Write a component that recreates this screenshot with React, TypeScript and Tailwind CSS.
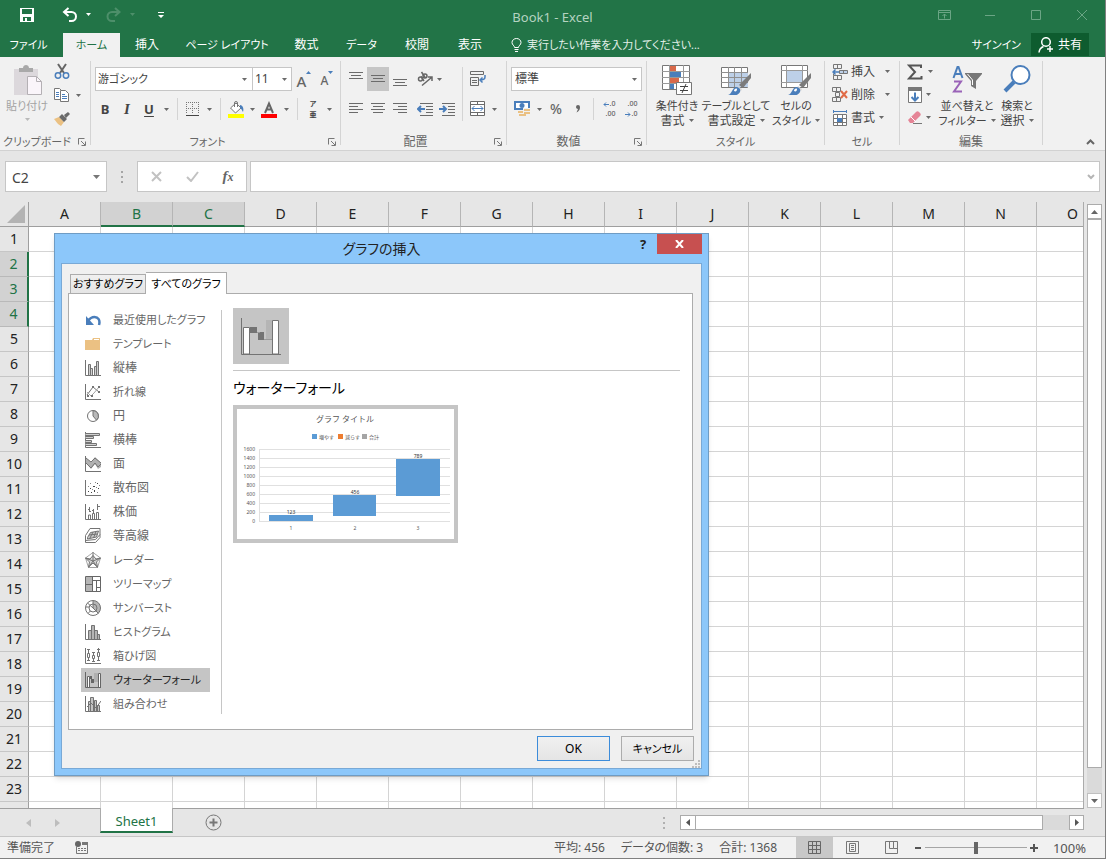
import { useState, type ReactNode } from "react"

type IconProps = {
    w?: number
    h?: number
    children: ReactNode
}

type GroupProps = {
    label: string
    width: string
    launcher?: boolean
    children: ReactNode
}

type ButtonProps = {
    label: string
    className?: string
    children: ReactNode
}

const columns = ["A", "B", "C", "D", "E", "F", "G", "H", "I", "J", "K", "L", "M", "N", "O"]
const rows = Array.from({ length: 23 }, (_, i) => String(i + 1)).concat("")

const ribbonTabs = [
    { label: "挿入", width: "w-[54px]" },
    { label: "ページ レイアウト", width: "w-[106px]" },
    { label: "数式", width: "w-[53px]" },
    { label: "データ", width: "w-[57px]" },
    { label: "校閲", width: "w-[54px]" },
    { label: "表示", width: "w-[52px]" },
]

function labelSize(label: string) {
    return /[ぁ-ヶ]/.test(label) ? "text-[11px]" : "text-[12px]"
}

function Icon({ w = 16, h = 16, children }: IconProps) {
    return (
        <svg width={w} height={h} viewBox={`0 0 ${w} ${h}`} fill="none" className="shrink-0" aria-hidden="true">
            {children}
        </svg>
    )
}

function Caret({ light = false }: { light?: boolean }) {
    return (
        <Icon w={5} h={3}>
            <path d="M0 0h5L2.5 3z" fill={light ? "#b9b9b9" : "#6a6a6a"} />
        </Icon>
    )
}

function ToolButton({ label, className = "w-[22px]", children }: ButtonProps) {
    return (
        <button aria-label={label} className={`flex h-6 shrink-0 items-center justify-center ${className}`}>
            {children}
        </button>
    )
}

function CaretButton({ label }: { label: string }) {
    return (
        <ToolButton label={label} className="w-3">
            <Caret />
        </ToolButton>
    )
}

function Divider() {
    return <div className="mx-[5px] h-[22px] w-px shrink-0 bg-[#d4d4d4]" />
}

function Group({ label, width, launcher, children }: GroupProps) {
    return (
        <section className={`flex shrink-0 ${width}`}>
            <div className="flex min-w-0 flex-1 flex-col">
                <div className="h-[76px]">{children}</div>
                <div className="flex h-[17px] items-end">
                    <p className={`flex-1 text-center leading-4 whitespace-nowrap text-[#666666] ${labelSize(label)}`}>{label}</p>
                    {launcher && (
                        <button aria-label={`${label}の設定`} className="flex h-4 w-4 items-center justify-center">
                            <Icon w={8} h={8}>
                                <path d="M.5 6.5v-6h6M3 3l4 4M7.5 3.5v4h-4" stroke="#777" />
                            </Icon>
                        </button>
                    )}
                </div>
            </div>
            <div className="mt-1 h-[84px] w-px bg-[#d4d4d4]" />
        </section>
    )
}

function BigButton({ lines, width, children }: { lines: string[]; width: string; children: ReactNode }) {
    return (
        <button className={`flex shrink-0 flex-col items-center pt-2 leading-[15px] whitespace-nowrap text-[#444444] ${width}`}>
            {children}
            <span className={`mt-[3px] ${labelSize(lines[0])}`}>{lines[0]}</span>
            <span className={`flex items-center gap-1 ${labelSize(lines[1])}`}>
                {lines[1]}
                <Caret />
            </span>
        </button>
    )
}

function AlignIcon({ widths, side, top = 1 }: { widths: number[]; side: "left" | "center" | "right"; top?: number }) {
    return (
        <Icon w={14} h={14}>
            {widths.map((width, i) => {
                const x = side === "left" ? 0 : side === "right" ? 14 - width : (14 - width) / 2
                return <rect key={i} x={x} y={top + i * 3} width={width} height="1" fill="#6b6b6b" />
            })}
        </Icon>
    )
}

const AXIS = "M.5 0v15.5H16"

const chartTypes = [
    {
        label: "最近使用したグラフ",
        icon: (
            <>
                <path d="M14 13c1.500-5-1-8-4.500-8C7 5 5 6 3 9" stroke="#4a7ebb" strokeWidth="2.5" />
                <path d="M1 4v9h8z" fill="#4a7ebb" />
            </>
        ),
    },
    {
        label: "テンプレート",
        icon: <path d="M0 4h7l1-2h7v12H0zM9 3v1h5V3z" fill="#ebc183" />,
    },
    {
        label: "縦棒",
        icon: (
            <>
                <path d={AXIS} stroke="#737373" />
                <path d="M3.5 15V4.5h2V15M5.5 15V8.500h2V15M9.5 15V6.5h2V15M11.5 15V1.5h2V15" stroke="#737373" fill="#d0d0d0" />
            </>
        ),
    },
    {
        label: "折れ線",
        icon: (
            <>
                <path d={AXIS} stroke="#737373" />
                <path d="M2 11l6-8 6 5" stroke="#737373" />
                <path d="M2 8l4 4 3-3 5-6" stroke="#a5a5a5" />
                <path d="M7 2h2v2H7zM13 7h2v2h-2zM2 11h2v2H2zM6 11h2v2H6zM13 2h2v2h-2z" fill="#737373" />
            </>
        ),
    },
    {
        label: "円",
        icon: (
            <>
                <circle cx="8" cy="8" r="5.5" stroke="#737373" />
                <path d="M8 2.5a5.5 5.5 0 0 1 3.5 9.7L8 8z" fill="#b9b9b9" stroke="#737373" />
            </>
        ),
    },
    {
        label: "横棒",
        icon: (
            <>
                <path d={AXIS} stroke="#737373" />
                <path d="M.5 1.500h14v2H.5M.5 4.500h8v2h-8M.5 8.500h6v2h-6M.5 11.500h11v2H.5" stroke="#737373" fill="#d0d0d0" />
            </>
        ),
    },
    {
        label: "面",
        icon: (
            <>
                <path d="M1 2l5 4 4-5 6 6v4l-3 2-3-5-4 5-5-6z" fill="#b0b0b0" />
                <path d={AXIS} stroke="#737373" />
                <path d="M1 2l5 4 4-4 6 5M1 7l5 5 4-5 3 4 3-3" stroke="#737373" />
            </>
        ),
    },
    {
        label: "散布図",
        icon: (
            <>
                <path d={AXIS} stroke="#737373" />
                <path d="M3 11h1v1H3zM5 8h1v1H5zM8 6h2v1H8zM9 10h1v2H9zM12 3h1v1h-1zM13 8h1v1h-1zM6 12h1v1H6z" fill="#444" />
                <path d="M5 3h1v1H5zM10 2h1v1h-1zM14 5h1v1h-1zM11 7h1v1h-1zM3 6h1v1H3zM12 12h1v1h-1zM7 9h1v1H7z" fill="#888" />
            </>
        ),
    },
    {
        label: "株価",
        icon: (
            <>
                <path d={AXIS} stroke="#737373" />
                <path d="M3.5 15v-4h2v4M7.5 15V9.5h2V15M11.5 15V8.5h2V15M4.5 3v5M8.5 5v5M12.5 0v6M3 5.500h1.500M4.500 7.500H6M7 6.500h1.500M12.500 2.500H15" stroke="#737373" />
            </>
        ),
    },
    {
        label: "等高線",
        icon: (
            <>
                <path d="M.5 7.500L5 .5h10v9L10.500 14.500H.5z" stroke="#737373" />
                <path d="M2.500 9.500l3-5 8-1.500-2 6-9 2z" fill="#c8c8c8" stroke="#737373" />
                <path d="M4 7l8.500-1M8 4l-3 6M11 3.500L8.500 10M.5 12.500l10-1 4.500-5" stroke="#737373" />
            </>
        ),
    },
    {
        label: "レーダー",
        icon: (
            <>
                <path d="M8 .5l7.500 5.500-3 9.500h-9L.5 6z" stroke="#a5a5a5" />
                <path d="M8 3.500L11 7l4.500-1-4 4 1 5L8 11l-4.500 4 1-5-4-4L5 7z" fill="#d5d5d5" stroke="#737373" />
                <path d="M8 0v9M.5 6L8 9l7.500-3M3.500 15.500L8 9l4.500 6.500" stroke="#737373" />
            </>
        ),
    },
    {
        label: "ツリーマップ",
        icon: (
            <>
                <path d="M.5.5h15v15H.5z" fill="#fff" stroke="#666" />
                <path d="M1 1h7v14H1z" fill="#b5b5b5" />
                <path d="M7.5 1v14M1 8.5h6.5M8 4.5h7.5M11.5 4.5V15M11.5 11.5H15" stroke="#666" />
            </>
        ),
    },
    {
        label: "サンバースト",
        icon: (
            <>
                <path d="M8 .5a7.500 7.500 0 0 1 5 13L8 8z" fill="#b5b5b5" />
                <circle cx="8" cy="8" r="7.5" stroke="#737373" />
                <circle cx="8" cy="8" r="4" stroke="#737373" />
                <path d="M8 .5V8l5.500 5.500M.5 7H4M3 13.500l2.500-2.700M2.500 3L8 8" stroke="#737373" />
            </>
        ),
    },
    {
        label: "ヒストグラム",
        icon: (
            <>
                <path d={AXIS} stroke="#737373" />
                <path d="M3.5 15V6.5h3V15M6.5 15V1.5h3V15M9.5 15V6.5h3V15M12.5 15v-4.5h2V15" fill="#b5b5b5" stroke="#737373" />
            </>
        ),
    },
    {
        label: "箱ひげ図",
        icon: (
            <>
                <path d={AXIS} stroke="#737373" />
                <path d="M3.5 1v11M8.5 4v9M13.5 0v12M2 1.500h3M7 4.500h3M12 1.500h3M2 12.500h3M7 13.500h3M12 12.500h3" stroke="#737373" />
                <path d="M2.500 5.500h2v4h-2zM7.500 7.500h2v3h-2zM12.500 4.500h2v4h-2z" fill="#fff" stroke="#737373" />
            </>
        ),
    },
    {
        label: "ウォーターフォール",
        icon: (
            <>
                <path d="M9 1h4v9H9z" fill="#b0b0b0" />
                <path d={AXIS} stroke="#666" />
                <path d="M2.500 15V4.500h2V15M13.500 15V1.500h2V15" fill="#fff" stroke="#666" />
                <path d="M5 4h2v3h2v4H6V7H5z" fill="#666" />
            </>
        ),
    },
    {
        label: "組み合わせ",
        icon: (
            <>
                <path d={AXIS} stroke="#737373" />
                <path d="M3.5 15V5.5h2V15M5.5 15V1.5h3V15M9.5 15V4.5h2V15M12.5 15V9.5h2V15" fill="#c4c4c4" stroke="#737373" />
                <path d="M2 11l4-4 5 5 5-7" stroke="#737373" />
            </>
        ),
    },
]

function TitleBar() {
    return (
        <div className="grid h-[33px] grid-cols-[1fr_auto_1fr] items-center">
            <div className="flex items-center pb-1 pl-5">
                <button aria-label="保存">
                    <Icon w={14} h={14}>
                        <path d="M0 0h14v14H0zM2 1v5h10V1zM3 9v4h2v-3h2v3h4V9z" fill="#fff" fillRule="evenodd" />
                    </Icon>
                </button>
                <button aria-label="元に戻す" className="ml-7">
                    <Icon w={16} h={16}>
                        <path d="M3 5h6.5a4.500 4.500 0 0 1 0 9H7" stroke="#fff" strokeWidth="2" />
                        <path d="M6.500 1L2 5l4.500 4" stroke="#fff" strokeWidth="2" />
                    </Icon>
                </button>
                <button aria-label="元に戻す一覧" className="ml-2">
                    <Icon w={5} h={3}>
                        <path d="M0 0h5L2.5 3z" fill="#fff" />
                    </Icon>
                </button>
                <button aria-label="やり直し" className="ml-[15px]">
                    <Icon w={16} h={16}>
                        <path d="M12 5H6a4.500 4.500 0 0 0 0 9h3M9 1l4.500 4L9 9" stroke="#4d8f6a" strokeWidth="2" />
                    </Icon>
                </button>
                <button aria-label="やり直し一覧" className="ml-2">
                    <Icon w={5} h={3}>
                        <path d="M0 0h5L2.5 3z" fill="#4d8f6a" />
                    </Icon>
                </button>
                <button aria-label="クイック アクセス ツール バーのカスタマイズ" className="ml-[23px]">
                    <Icon w={6} h={6}>
                        <path d="M0 0h6v1H0zM0 3h6L3 6z" fill="#fff" />
                    </Icon>
                </button>
            </div>
            <h1 className="text-[13px] text-[#b4d3c1]">Book1 - Excel</h1>
            <div className="flex items-center justify-end pb-1">
                <button aria-label="リボンの表示オプション" className="flex w-[46px] justify-center">
                    <Icon w={13} h={10}>
                        <path d="M.5.5h12v9H.5zM.5 2.5h12M6.5 8.5V4M4.5 6l2-2 2 2" stroke="#6ba585" />
                    </Icon>
                </button>
                <button aria-label="最小化" className="flex w-[46px] justify-center">
                    <Icon w={10} h={10}>
                        <path d="M0 5.5h10" stroke="#6ba585" />
                    </Icon>
                </button>
                <button aria-label="最大化" className="flex w-[46px] justify-center">
                    <Icon w={10} h={10}>
                        <path d="M.5.5h9v9h-9z" stroke="#6ba585" />
                    </Icon>
                </button>
                <button aria-label="閉じる" className="flex w-[46px] justify-center">
                    <Icon w={10} h={10}>
                        <path d="M0 0l10 10M10 0L0 10" stroke="#6ba585" />
                    </Icon>
                </button>
            </div>
        </div>
    )
}

function TabBar() {
    return (
        <nav className="flex h-6 items-center text-[11px] whitespace-nowrap text-white">
            <button className="w-[63px] pr-[6px]">ファイル</button>
            <button className="h-6 w-[57px] bg-[#f1f1f1] text-[#217346]">ホーム</button>
            {ribbonTabs.map((tab) => (
                <button key={tab.label} className={`${tab.width} ${labelSize(tab.label)}`}>{tab.label}</button>
            ))}
            <button className="ml-[15px] flex items-center gap-[5px] text-[#e4f0e9]">
                <Icon w={11} h={14}>
                    <path d="M3.5 9.5c0-2-2.500-2.500-2.500-5a4.500 4 0 0 1 9 0c0 2.500-2.500 3-2.500 5zM3.500 11.500h4M4 13.500h3" stroke="#fff" />
                </Icon>
                実行したい作業を入力してください...
            </button>
            <button className="mr-[10px] ml-auto">サインイン</button>
            <button className="mr-4 flex h-[23px] w-[58px] items-center justify-center gap-1 self-start bg-[#0e5c2f] text-[12px]">
                <Icon w={16} h={16}>
                    <circle cx="8" cy="5" r="4.3" stroke="#fff" strokeWidth="1.5" />
                    <path d="M1 15.500c.3-3 2-5 4.500-6M9 12h6M12 9v6" stroke="#fff" strokeWidth="1.5" />
                </Icon>
                共有
            </button>
        </nav>
    )
}

function BrushOverlay() {
    return (
        <>
            <path d="M30 8v5l-8 10-4-3z" fill="#7b7b7b" />
            <path d="M17 21l4 3-1 2-4-3z" fill="#d8d8d8" />
            <path d="M7 30c4-1 4-7 8-8 3 0 5 2 4 5-2 4-7 4-12 3z" fill="#4a7ebb" />
            <path d="M13 26c0-2 2-3 3-2 0 2-1 3-3 2z" fill="#fff" />
        </>
    )
}

function Ribbon() {
    return (
        <div className="flex h-[94px] border-b border-[#d2d2d2] bg-[#f1f1f1]">
            <Group label="クリップボード" width="w-[91px]" launcher>
                <div className="flex">
                    <button className="flex w-[54px] flex-col items-center pt-2 text-[11px] leading-[15px] whitespace-nowrap text-[#a3a3a3]">
                        <Icon w={30} h={30}>
                            <path d="M2 4h24v26H2z" fill="#dcd8dc" />
                            <path d="M7 3h4c0-4 6-4 6 0h4v4H7z" fill="#a9a9a9" />
                            <path d="M15.5 11.5h9l5 5v13h-14z" fill="#faf5fa" stroke="#b4b0b4" />
                            <path d="M24.5 11.5v5h5" stroke="#b4b0b4" />
                        </Icon>
                        <span className="mt-[3px]">貼り付け</span>
                        <span className="flex h-3 items-center"><Caret light /></span>
                    </button>
                    <div className="flex flex-col pt-[2px]">
                        <ToolButton label="切り取り" className="w-4">
                            <Icon>
                                <path d="M4 1l6 9M12 1L6 10" stroke="#666" strokeWidth="2" />
                                <circle cx="4" cy="12.5" r="2.7" stroke="#4a7ebb" strokeWidth="1.5" />
                                <circle cx="12" cy="12.5" r="2.7" stroke="#4a7ebb" strokeWidth="1.5" />
                            </Icon>
                        </ToolButton>
                        <div className="flex">
                            <ToolButton label="コピー" className="w-4">
                                <Icon>
                                    <path d="M.5 1.5h5l3 3v8h-8z" fill="#fff" stroke="#777" />
                                    <path d="M6.5 3.5h5l3 3v8h-8z" fill="#fff" stroke="#777" />
                                    <path d="M2 5.500h3M2 7.500h3M2 9.500h3M8 7.500h3M8 9.500h5M8 11.500h5" stroke="#4a7ebb" />
                                </Icon>
                            </ToolButton>
                            <ToolButton label="コピー オプション" className="w-4">
                                <Caret />
                            </ToolButton>
                        </div>
                        <ToolButton label="書式のコピー" className="w-4">
                            <Icon>
                                <path d="M0 8l5-2 5 5-3 4-3-2z" fill="#ebc183" />
                                <path d="M5 6l3-3 5 5-3 3zM10 4l4-3 2 2-4 4z" fill="#6a6a6a" />
                            </Icon>
                        </ToolButton>
                    </div>
                </div>
            </Group>

            <Group label="フォント" width="w-[250px]" launcher>
                <div className="flex flex-col gap-[6px] pt-[10px]">
                    <div className="flex items-center pl-1">
                        <div className="relative w-[158px]">
                            <select aria-label="フォント名" className="h-6 w-full appearance-none border border-[#c6c6c6] bg-white pl-[2px] text-[11px] text-[#444444]">
                                <option>游ゴシック</option>
                            </select>
                            <span className="pointer-events-none absolute top-[11px] right-[6px]"><Caret /></span>
                        </div>
                        <div className="relative -ml-px w-10">
                            <select aria-label="フォント サイズ" className="h-6 w-full appearance-none border border-[#c6c6c6] bg-white pl-[2px] text-[12px] text-[#444444]">
                                <option>11</option>
                            </select>
                            <span className="pointer-events-none absolute top-[11px] right-[5px]"><Caret /></span>
                        </div>
                        <ToolButton label="フォント サイズの拡大" className="w-6">
                            <span className="pt-1 text-[15px] leading-5 font-medium text-[#666666]">A</span>
                            <span className="self-start pt-1"><Icon w={5} h={3}><path d="M0 3h5L2.5 0z" fill="#4a7ebb" /></Icon></span>
                        </ToolButton>
                        <ToolButton label="フォント サイズの縮小" className="w-[22px]">
                            <span className="pt-1 text-[12px] leading-5 font-medium text-[#666666]">A</span>
                            <span className="self-start pt-1"><Icon w={5} h={3}><path d="M0 0h5L2.5 3z" fill="#4a7ebb" /></Icon></span>
                        </ToolButton>
                    </div>
                    <div className="flex items-center pl-[3px] text-[13px] font-bold text-[#444444]">
                        <ToolButton label="太字">B</ToolButton>
                        <ToolButton label="斜体"><i className="font-['Liberation_Serif',serif] text-[15px]">I</i></ToolButton>
                        <ToolButton label="下線"><u className="underline-offset-2">U</u></ToolButton>
                        <CaretButton label="下線オプション" />
                        <Divider />
                        <ToolButton label="罫線" className="w-5">
                            <Icon w={14} h={14}>
                                <path d="M.5 0v12M6.5 0v12M12.5 0v12M0 .5h13M0 6.5h13" stroke="#777" strokeDasharray="1 1" />
                                <path d="M0 13.500h13" stroke="#444" />
                            </Icon>
                        </ToolButton>
                        <CaretButton label="罫線オプション" />
                        <Divider />
                        <ToolButton label="塗りつぶしの色" className="w-5">
                            <Icon w={16} h={17}>
                                <path d="M2.5 7L8 2l5 5-5.500 5z" fill="#fff" stroke="#777" />
                                <path d="M6.5 6V2a1.500 1.500 0 0 1 3 0v4" stroke="#777" />
                                <path d="M12 4c3 0 4 4 3 7-1-1-1-3-3-4z" fill="#4a7ebb" />
                                <path d="M0 13h16v4H0z" fill="#ff0" />
                            </Icon>
                        </ToolButton>
                        <CaretButton label="塗りつぶしの色オプション" />
                        <ToolButton label="フォントの色">
                            <Icon w={16} h={17}>
                                <path d="M4 12L8 2.500 12 12M5.500 8.500h5" stroke="#666" strokeWidth="2" />
                                <path d="M0 13h16v4H0z" fill="#f00" />
                            </Icon>
                        </ToolButton>
                        <CaretButton label="フォントの色オプション" />
                        <Divider />
                        <ToolButton label="ふりがな" className="w-5">
                            <span className="flex flex-col text-[7px] leading-[11px] font-semibold">
                                <span>ア</span>
                                <span>亜</span>
                            </span>
                        </ToolButton>
                        <CaretButton label="ふりがなオプション" />
                    </div>
                </div>
            </Group>

            <Group label="配置" width="w-[166px]" launcher>
                <div className="flex pt-[10px]">
                    <div className="flex w-[121px] flex-col gap-[6px] pl-1">
                        <div className="flex items-center">
                            <ToolButton label="上揃え"><AlignIcon side="center" widths={[14, 10, 14]} top={0} /></ToolButton>
                            <ToolButton label="上下中央揃え" className="w-[22px] bg-[#c6c6c6]"><AlignIcon side="center" widths={[14, 10, 14]} top={3} /></ToolButton>
                            <ToolButton label="下揃え"><AlignIcon side="center" widths={[14, 10, 14]} top={7} /></ToolButton>
                            <ToolButton label="方向" className="ml-[6px] w-4">
                                <Icon>
                                    <circle cx="3.5" cy="8" r="2" stroke="#666" strokeWidth="1.5" />
                                    <circle cx="8" cy="5" r="2" stroke="#666" strokeWidth="1.5" />
                                    <path d="M4 5.500l3 4.500M4.500 1l4 6M5 14.500l9.500-8M11 6h4v4" stroke="#666" strokeWidth="1.5" />
                                </Icon>
                            </ToolButton>
                            <CaretButton label="方向オプション" />
                        </div>
                        <div className="flex items-center">
                            <ToolButton label="左揃え"><AlignIcon side="left" widths={[14, 9, 14, 9]} /></ToolButton>
                            <ToolButton label="中央揃え"><AlignIcon side="center" widths={[14, 10, 14, 10]} /></ToolButton>
                            <ToolButton label="右揃え"><AlignIcon side="right" widths={[14, 9, 14, 9]} /></ToolButton>
                            <ToolButton label="インデントを減らす" className="ml-[6px] w-4">
                                <Icon w={16} h={14}>
                                    <path d="M3 1.500h13M9 4.500h7M9 7.500h7M9 10.500h7M3 13.500h13" stroke="#6b6b6b" />
                                    <path d="M8 7H1M4 4L1 7l3 3" stroke="#4a7ebb" strokeWidth="2" />
                                </Icon>
                            </ToolButton>
                            <ToolButton label="インデントを増やす" className="ml-[6px] w-4">
                                <Icon w={16} h={14}>
                                    <path d="M3 1.500h13M9 4.500h7M9 7.500h7M9 10.500h7M3 13.500h13" stroke="#6b6b6b" />
                                    <path d="M0 7h7M4 4l3 3-3 3" stroke="#4a7ebb" strokeWidth="2" />
                                </Icon>
                            </ToolButton>
                        </div>
                    </div>
                    <div className="h-[54px] w-px bg-[#d4d4d4]" />
                    <div className="flex flex-col gap-[6px] pl-[7px]">
                        <ToolButton label="折り返して全体を表示する" className="w-4">
                            <Icon w={16} h={16}>
                                <path d="M.5.5h13v3H.5zM.5 6.5h8v8h-8zM2 9.5h5M2 11.5h5" stroke="#6b6b6b" />
                                <path d="M15 4v2c0 2-1 3-5 3M12.500 6.500L10 9l2.500 2.500" stroke="#4a7ebb" strokeWidth="1.5" />
                            </Icon>
                        </ToolButton>
                        <div className="flex">
                            <ToolButton label="セルを結合して中央揃え" className="w-4">
                                <Icon w={16} h={16}>
                                    <path d="M.5.5h14v14H.5zM.5 3.5h14M.5 11.5h14M7.5.5v3M7.5 11.5v3" fill="#fff" stroke="#6b6b6b" />
                                    <path d="M2 7.5h11M4.500 5L2 7.500 4.500 10M10.500 5L13 7.500 10.500 10" stroke="#4a7ebb" />
                                </Icon>
                            </ToolButton>
                            <ToolButton label="結合オプション" className="w-4"><Caret /></ToolButton>
                        </div>
                    </div>
                </div>
            </Group>

            <Group label="数値" width="w-[140px]" launcher>
                <div className="flex flex-col gap-[6px] pt-[10px] pl-1">
                    <div className="relative w-[131px]">
                        <select aria-label="数値の書式" className="h-6 w-full appearance-none border border-[#c6c6c6] bg-white pl-[3px] text-[#444444]">
                            <option>標準</option>
                        </select>
                        <span className="pointer-events-none absolute top-[11px] right-[5px]"><Caret /></span>
                    </div>
                    <div className="flex items-center text-[14px] font-medium text-[#666666]">
                        <ToolButton label="通貨表示形式">
                            <Icon w={17} h={17}>
                                <path d="M1 1h14v7H1z" fill="#fff" stroke="#4a7ebb" strokeWidth="2" />
                                <circle cx="8" cy="4.5" r="2.5" fill="#4a7ebb" />
                                <path d="M9 7h8v6h-3v3H4v-6h5z" fill="#f1f1f1" />
                                <path d="M10 8h6v2h-6zM10 11h6v2h-6zM4 10h5v2H4zM5 13h7v2H5z" fill="#ebc183" />
                            </Icon>
                        </ToolButton>
                        <CaretButton label="通貨オプション" />
                        <ToolButton label="パーセント スタイル">%</ToolButton>
                        <ToolButton label="桁区切りスタイル">
                            <Icon w={6} h={8}>
                                <path d="M1 2a2 2 0 0 1 4 0c0 3-1 4-3.500 5.500L3 4C2 4 1 3 1 2z" fill="#666" />
                            </Icon>
                        </ToolButton>
                        <div className="mx-1 h-[22px] w-px bg-[#d4d4d4]" />
                        <ToolButton label="小数点以下の表示桁数を増やす">
                            <span className="flex flex-col items-end text-[7px] leading-[10px]">
                                <span className="flex items-center gap-px">
                                    <Icon w={6} h={5}><path d="M6 2.5H1M3 .5l-2 2 2 2" stroke="#4a7ebb" /></Icon>
                                    .0
                                </span>
                                <span>.00</span>
                            </span>
                        </ToolButton>
                        <ToolButton label="小数点以下の表示桁数を減らす">
                            <span className="flex flex-col items-end text-[7px] leading-[10px]">
                                <span>.00</span>
                                <span className="flex items-center gap-px">
                                    <Icon w={6} h={5}><path d="M0 2.5h5M3 .5l2 2-2 2" stroke="#4a7ebb" /></Icon>
                                    .0
                                </span>
                            </span>
                        </ToolButton>
                    </div>
                </div>
            </Group>

            <Group label="スタイル" width="w-[178px]">
                <div className="flex pl-1">
                    <BigButton lines={["条件付き", "書式"]} width="w-[52px]">
                        <Icon w={30} h={30}>
                            <path d="M.5.5h27v24H.5z" fill="#fff" stroke="#777" />
                            <path d="M7.5 0v24M21.5 0v24M0 6.5h28M0 12.5h28M0 18.5h28" stroke="#999" />
                            <path d="M8 1h6v5H8zM8 13h9v5H8z" fill="#d9694a" />
                            <path d="M8 7h11v5H8zM8 19h4v5H8z" fill="#4a7ebb" />
                            <path d="M14.5 17.5h15v12h-15z" fill="#fff" stroke="#777" />
                            <path d="M18 21.5h8M18 25.5h8M24 19l-4 9" stroke="#444" />
                        </Icon>
                    </BigButton>
                    <BigButton lines={["テーブルとして", "書式設定"]} width="w-[66px]">
                        <Icon w={30} h={30}>
                            <path d="M.5 2.5h26v20H.5z" fill="#fff" stroke="#777" />
                            <path d="M7 8h20v14H7z" fill="#bdd0e8" />
                            <path d="M7.5 2v20M13.5 2v20M20.5 2v20M0 7.5h27M0 12.5h27M0 17.5h27" stroke="#8f8f8f" />
                            <BrushOverlay />
                        </Icon>
                    </BigButton>
                    <BigButton lines={["セルの", "スタイル"]} width="w-[54px]">
                        <Icon w={30} h={30}>
                            <path d="M.5.5h26v22H.5z" fill="#fff" stroke="#777" />
                            <path d="M5.5 0v22M21.5 0v22M0 5.5h27M0 17.5h27" stroke="#999" />
                            <path d="M6 6h15v11H6z" fill="#bdd0e8" />
                            <BrushOverlay />
                        </Icon>
                    </BigButton>
                </div>
            </Group>

            <Group label="セル" width="w-[75px]">
                <div className="flex flex-col pt-[3px] pl-[7px] text-[#444444]">
                    <button className="flex h-[23px] items-center gap-[3px]">
                        <Icon>
                            <path d="M1.5.5h8v4h-8zM5.5.5v4M1.5 11.5h8v4h-8zM5.5 11.5v4M1.5 9.5v2" stroke="#777" />
                            <path d="M7.5 6.5h8v3h-8zM11.5 6.5v3" fill="#bdd0e8" stroke="#777" />
                            <path d="M7 8H1M3.500 5.500L1 8l2.500 2.500" stroke="#4a7ebb" strokeWidth="1.5" />
                        </Icon>
                        <span className="w-[31px] text-left">挿入</span>
                        <Caret />
                    </button>
                    <button className="flex h-[23px] items-center gap-[3px]">
                        <Icon>
                            <path d="M.5.5h8v4h-8zM4.5.5v4M.5 10.5h8v4h-8zM4.5 10.5v4M3.5 5.5h4v4h-4z" stroke="#777" />
                            <path d="M9 4l6 7M15 4l-6 7" stroke="#e06a45" strokeWidth="2" />
                        </Icon>
                        <span className="w-[31px] text-left">削除</span>
                        <Caret />
                    </button>
                    <button className="flex h-[23px] items-center gap-[3px]">
                        <Icon>
                            <path d="M1.5 4.5h13v11h-13zM5.5 4.5v11M10.5 4.5v11M1.5 8.5h13M1.5 12.5h13" fill="#fff" stroke="#777" />
                            <path d="M5 8h5v4H5zM2 1h12v1H2zM1 0h1v3H1zM14 0h1v3h-1z" fill="#4a7ebb" />
                        </Icon>
                        <span className="w-[25px] text-left">書式</span>
                        <Caret />
                    </button>
                </div>
            </Group>

            <Group label="編集" width="w-[143px]">
                <div className="flex">
                    <div className="flex w-[38px] flex-col pt-[3px] pl-[7px]">
                        <button aria-label="オート SUM" className="flex h-[23px] items-center gap-[5px]">
                            <Icon w={16} h={16}>
                                <path d="M14 4V1.500H2L8 8l-6 6.500h12.500V12" stroke="#555" strokeWidth="2" />
                            </Icon>
                            <Caret />
                        </button>
                        <button aria-label="フィル" className="flex h-[23px] items-center gap-[3px]">
                            <Icon>
                                <path d="M1.5 1.5h13v14h-13z" fill="#fff" stroke="#777" />
                                <path d="M1 0h14v4H1z" fill="#777" />
                                <path d="M8 5.500v8M4.500 10L8 13.500l3.500-3.500" stroke="#4a7ebb" strokeWidth="2" />
                            </Icon>
                            <Caret />
                        </button>
                        <button aria-label="クリア" className="flex h-[23px] items-center gap-[3px]">
                            <Icon>
                                <path d="M1 10l8-8c1-1 2-1 3 0l1 1c1 1 1 2 0 3l-7 7H3z" fill="#e58496" />
                                <path d="M4 7l5 5" stroke="#fff" />
                                <path d="M6 13.500h9" stroke="#777" />
                            </Icon>
                            <Caret />
                        </button>
                    </div>
                    <BigButton lines={["並べ替えと", "フィルター"]} width="w-[58px]">
                        <Icon w={30} h={30}>
                            <path d="M1.5 13L5.5 2h1l4 11M3 9h6" stroke="#4a7ebb" strokeWidth="2" />
                            <path d="M2 16.500h7L2 26.500h8" stroke="#9a63b8" strokeWidth="2" />
                            <path d="M13 8h17v1l-6 7v8l-5-3v-5l-6-7z" fill="#777" />
                            <path d="M15.500 9l5 6v5" stroke="#fff" />
                        </Icon>
                    </BigButton>
                    <BigButton lines={["検索と", "選択"]} width="w-[42px]">
                        <Icon w={28} h={30}>
                            <circle cx="17.5" cy="10" r="9" fill="#fff" stroke="#4a7ebb" strokeWidth="2" />
                            <path d="M11 17L2 26" stroke="#4a7ebb" strokeWidth="4" />
                        </Icon>
                    </BigButton>
                </div>
            </Group>

            <button aria-label="リボンを折りたたむ" className="mr-[10px] mb-[5px] ml-auto self-end">
                <Icon w={9} h={6}>
                    <path d="M1 5l3.500-3.500L8 5" stroke="#666" strokeWidth="2" />
                </Icon>
            </button>
        </div>
    )
}

function FormulaBar() {
    return (
        <div className="flex items-center bg-[#e6e6e6] py-[10px] pr-[5px] pl-[5px]">
            <div className="flex h-[31px] w-[102px] items-center border border-[#c6c6c6] bg-white">
                <input aria-label="名前ボックス" defaultValue="C2" className="w-full min-w-0 pt-[2px] pl-[6px] text-[14px] text-[#444444] outline-none" />
                <button aria-label="名前の一覧" className="pr-[6px]">
                    <Icon w={7} h={4}>
                        <path d="M0 0h7L3.5 4z" fill="#777" />
                    </Icon>
                </button>
            </div>
            <div className="flex w-[30px] justify-center">
                <Icon w={2} h={12}>
                    <path d="M0 0h2v2H0zM0 5h2v2H0zM0 10h2v2H0z" fill="#a5a5a5" />
                </Icon>
            </div>
            <div className="flex h-[31px] w-[110px] items-center border border-[#c6c6c6] bg-white">
                <button aria-label="キャンセル" className="flex w-9 justify-center">
                    <Icon w={11} h={11}><path d="M1 1l9 9M10 1l-9 9" stroke="#c2c2c2" strokeWidth="2" /></Icon>
                </button>
                <button aria-label="入力" className="flex w-9 justify-center">
                    <Icon w={13} h={11}><path d="M1 6l4 4 7-9" stroke="#c2c2c2" strokeWidth="2" /></Icon>
                </button>
                <button aria-label="関数の挿入" className="w-9 font-['Liberation_Serif',serif] text-[15px] leading-5 font-bold text-[#666666] italic">
                    f<span className="text-[12px]">x</span>
                </button>
            </div>
            <div className="ml-[3px] flex h-[31px] flex-1 items-center border border-[#c6c6c6] bg-white">
                <input aria-label="数式バー" className="w-full min-w-0 px-2 outline-none" />
                <button aria-label="数式バーの展開" className="pr-1">
                    <Icon w={8} h={6}><path d="M1 1l3 3 3-3" stroke="#b5b5b5" strokeWidth="2" /></Icon>
                </button>
            </div>
        </div>
    )
}

function Sheet() {
    const isSelectedColumn = (column: string) => column === "B" || column === "C"
    const isSelectedRow = (row: string) => row === "2" || row === "3" || row === "4"

    return (
        <div className="flex min-h-0 flex-1 bg-[#e6e6e6]">
            <div className="min-w-0 flex-1 overflow-hidden border-r border-[#ababab]">
                <table className="w-[1109px] table-fixed border-separate border-spacing-0 bg-white text-[14px] leading-5">
                    <thead>
                        <tr className="h-[25px]">
                            <th className="w-[29px] border-r border-b border-[#9f9f9f] bg-[#e6e6e6] pl-[7px]">
                                <Icon w={18} h={18}><path d="M18 0v18H0z" fill="#b3b3b3" /></Icon>
                            </th>
                            {columns.map((column) => (
                                <th
                                    key={column}
                                    scope="col"
                                    className={isSelectedColumn(column)
                                        ? "w-18 border-r border-b-2 border-r-[#b5b5b5] border-b-[#217346] bg-[#d2d2d2] p-0 font-normal text-[#217346]"
                                        : "w-18 border-r border-b border-r-[#b5b5b5] border-b-[#9f9f9f] bg-[#e6e6e6] p-0 font-normal text-[#222222]"}
                                >
                                    {column}
                                </th>
                            ))}
                        </tr>
                    </thead>
                    <tbody>
                        {rows.map((row, i) => (
                            <tr key={i} className="h-[25px]">
                                <th
                                    scope="row"
                                    className={isSelectedRow(row)
                                        ? "border-r-2 border-b border-r-[#217346] border-b-[#b9b9b9] bg-[#d2d2d2] p-0 font-normal text-[#217346]"
                                        : "border-r border-b border-r-[#9f9f9f] border-b-[#c6c6c6] bg-[#e6e6e6] p-0 font-normal text-[#222222]"}
                                >
                                    {row}
                                </th>
                                {columns.map((column) => (
                                    <td key={column} className="border-r border-b border-[#d4d4d4] p-0" />
                                ))}
                            </tr>
                        ))}
                    </tbody>
                </table>
            </div>
            <div className="mt-[2px] mr-[3px] ml-[3px] flex w-[15px] flex-col bg-[#dadada]">
                <button aria-label="上へスクロール" className="flex h-[15px] items-center justify-center border border-[#ababab] bg-white">
                    <Icon w={7} h={4}><path d="M0 4h7L3.5 0z" fill="#666" /></Icon>
                </button>
                <div className="mb-[25px] flex-1 border border-[#ababab] bg-white" />
                <button aria-label="下へスクロール" className="flex h-[15px] items-center justify-center border border-[#c0c0c0] bg-white">
                    <Icon w={7} h={4}><path d="M0 0h7L3.5 4z" fill="#666" /></Icon>
                </button>
            </div>
        </div>
    )
}

function SheetTabs() {
    return (
        <div className="h-7 bg-[#e6e6e6] pr-[21px]">
            <div className="flex h-7 items-center border-t border-[#9f9f9f]">
                <button aria-label="前のシート" className="ml-[26px]">
                    <Icon w={5} h={8}><path d="M5 0v8L0 4z" fill="#bdbdbd" /></Icon>
                </button>
                <button aria-label="次のシート" className="ml-6">
                    <Icon w={5} h={8}><path d="M0 0v8l5-4z" fill="#bdbdbd" /></Icon>
                </button>
                <button className="-mt-px ml-10 h-[25px] w-[73px] self-start border-x border-b-2 border-x-[#ababab] border-b-[#217346] bg-white pt-[2px] text-[13px] text-[#217346]">
                    Sheet1
                </button>
                <button aria-label="新しいシート" className="ml-8">
                    <Icon w={17} h={17}>
                        <circle cx="8.5" cy="8.5" r="7.5" stroke="#777" />
                        <path d="M4.500 8.500h8M8.500 4.500v8" stroke="#777" strokeWidth="2" />
                    </Icon>
                </button>
                <div className="ml-auto flex items-center">
                    <Icon w={2} h={12}>
                        <path d="M0 0h2v2H0zM0 5h2v2H0zM0 10h2v2H0z" fill="#b0b0b0" />
                    </Icon>
                    <div className="ml-[15px] flex h-[15px] w-[404px] bg-[#dadada]">
                        <button aria-label="左へスクロール" className="flex w-4 items-center justify-center border border-[#ababab] bg-white">
                            <Icon w={4} h={7}><path d="M4 0v7L0 3.500z" fill="#555" /></Icon>
                        </button>
                        <div className="mr-[26px] -ml-px flex-1 border border-[#ababab] bg-white" />
                        <button aria-label="右へスクロール" className="flex w-[15px] items-center justify-center border border-[#ababab] bg-white">
                            <Icon w={4} h={7}><path d="M0 0v7l4-3.500z" fill="#555" /></Icon>
                        </button>
                    </div>
                </div>
            </div>
        </div>
    )
}

function StatusBar() {
    return (
        <footer className="flex h-[22px] items-center border-t border-[#c6c6c6] bg-[#f1f1f1] pl-[7px] whitespace-nowrap text-[#555555]">
            <p>準備完了</p>
            <button aria-label="マクロの記録" className="ml-5">
                <Icon w={13} h={13}>
                    <path d="M1.5 5.5v7h11V2.5H8" stroke="#777" />
                    <circle cx="3" cy="3" r="3" fill="#666" />
                    <path d="M7 1h6v3H7zM3 7h2v1H3zM6 7h2v1H6zM9 7h2v1H9zM3 9h2v1H3zM6 9h2v1H6zM9 9h2v1H9z" fill="#777" />
                </Icon>
            </button>
            <div className="ml-auto flex gap-4 pr-[19px]">
                <p>平均: 456</p>
                <p>データの個数: 3</p>
                <p>合計: 1368</p>
            </div>
            <button aria-label="標準" className="flex h-full w-[37px] items-center justify-center bg-[#c8c8c8]">
                <Icon w={13} h={13}><path d="M.5.5h12v12H.5zM4.5.5v12M8.5.5v12M.5 4.5h12M.5 8.5h12" stroke="#666" /></Icon>
            </button>
            <button aria-label="ページ レイアウト" className="flex w-[39px] items-center justify-center">
                <Icon w={13} h={13}><path d="M.5.5h12v12H.5zM3.5 2.5h6v8h-6zM5 4.5h3M5 6.5h3M5 8.5h3" stroke="#777" /></Icon>
            </button>
            <button aria-label="改ページ プレビュー" className="flex w-[39px] items-center justify-center">
                <Icon w={13} h={13}><path d="M.5.5h12v12H.5zM4.5.5v7h4v-7M8.5 7.5h4" stroke="#777" /></Icon>
            </button>
            <button aria-label="縮小" className="ml-1">
                <Icon w={6} h={2}><path d="M0 1h6" stroke="#555" strokeWidth="2" /></Icon>
            </button>
            <input
                type="range"
                aria-label="ズーム"
                min="0"
                max="100"
                defaultValue="50"
                className="mr-[3px] ml-1 h-px w-[102px] appearance-none bg-[#a5a5a5] [&::-webkit-slider-thumb]:h-3 [&::-webkit-slider-thumb]:w-1 [&::-webkit-slider-thumb]:appearance-none [&::-webkit-slider-thumb]:bg-[#666666]"
            />
            <button aria-label="拡大">
                <Icon w={8} h={8}><path d="M0 4h8M4 0v8" stroke="#555" strokeWidth="2" /></Icon>
            </button>
            <button className="w-[67px] pr-1 text-center text-[13px]">100%</button>
        </footer>
    )
}

const bars = [
    { value: 123, x: 32, y: 106, height: 6, width: 44, label: "1" },
    { value: 456, x: 96, y: 86, height: 21, width: 43, label: "2" },
    { value: 789, x: 159, y: 50, height: 37, width: 44, label: "3" },
]

const legend = [
    { label: "増やす", color: "#5b9bd5", x: 75 },
    { label: "減らす", color: "#ed7d31", x: 101 },
    { label: "合計", color: "#a5a5a5", x: 125 },
]

function ChartPreview() {
    return (
        <svg viewBox="0 0 217 130" className="h-[130px] w-[217px] bg-white [font-feature-settings:normal]" fontSize="5" fill="#555">
            <text x="108" y="13" fontSize="8" textAnchor="middle">グラフ タイトル</text>
            {legend.map((entry) => (
                <g key={entry.label}>
                    <rect x={entry.x} y="25" width="5" height="5" fill={entry.color} />
                    <text x={entry.x + 7} y="30">{entry.label}</text>
                </g>
            ))}
            {[1600, 1400, 1200, 1000, 800, 600, 400, 200, 0].map((tick, i) => (
                <g key={tick}>
                    <path d={`M22 ${40.5 + i * 9}h191`} stroke="#e0e0e0" />
                    <text x="18" y={42 + i * 9} textAnchor="end">{tick}</text>
                </g>
            ))}
            <path d="M22.5 40v72" stroke="#e0e0e0" />
            {bars.map((bar) => (
                <g key={bar.label} textAnchor="middle">
                    <rect x={bar.x} y={bar.y} width={bar.width} height={bar.height} fill="#5b9bd5" />
                    <text x={bar.x + 22} y={bar.y - 1} fill="#333">{bar.value}</text>
                    <text x={bar.x + 22} y="121">{bar.label}</text>
                </g>
            ))}
        </svg>
    )
}

function InsertChartDialog() {
    const [selected, setSelected] = useState("ウォーターフォール")

    return (
        <div role="dialog" aria-label="グラフの挿入" className="absolute top-[233px] left-[54px] w-[655px] border border-[#6f9cc4] bg-[#8cc7fa] shadow-md">
            <div className="grid h-[29px] grid-cols-[1fr_auto_1fr] px-[6px]">
                <h2 className="col-start-2 pt-px text-[14px] leading-7 text-[#222222]">グラフの挿入</h2>
                <div className="flex items-start justify-end">
                    <button aria-label="ヘルプ" className="w-7 text-[13px] leading-5 font-bold text-[#222222]">?</button>
                    <button aria-label="閉じる" className="flex h-5 w-[45px] items-center justify-center bg-[#c75050]">
                        <Icon w={9} h={8}><path d="M1 0l7 8M8 0L1 8" stroke="#fff" strokeWidth="2" /></Icon>
                    </button>
                </div>
            </div>
            <div className="relative mx-[6px] mb-[6px] border border-[#79a9d6] bg-[#f0f0f0] pt-2 pb-[7px]">
                <div className="flex h-[21px] items-end pl-2 text-[11px] whitespace-nowrap text-black">
                    <button className="h-[19px] w-[76px] border border-b-0 border-[#acacac] bg-linear-to-b from-[#f0f0f0] to-[#e5e5e5]">おすすめグラフ</button>
                    <button className="relative -mb-px h-[22px] w-[81px] border border-b-0 border-l-0 border-[#acacac] bg-white">すべてのグラフ</button>
                </div>
                <div className="mr-2 ml-[6px] flex h-[437px] border border-[#acacac] bg-white pt-[14px] pl-3">
                    <ul className="w-[129px] whitespace-nowrap">
                        {chartTypes.map((type) => (
                            <li key={type.label}>
                                <button
                                    onClick={() => setSelected(type.label)}
                                    className={type.label === selected
                                        ? `flex h-6 w-full items-center gap-3 bg-[#c5c5c5] pl-1 text-[#262626] ${labelSize(type.label)}`
                                        : `flex h-6 w-full items-center gap-3 pl-1 text-[#666666] ${labelSize(type.label)}`}
                                >
                                    <Icon>{type.icon}</Icon>
                                    {type.label}
                                </button>
                            </li>
                        ))}
                    </ul>
                    <div className="mt-[2px] ml-[11px] h-[404px] w-px bg-[#c6c6c6]" />
                    <div className="flex flex-1 flex-col items-start pr-3 pl-[11px]">
                        <button aria-label="ウォーターフォール" className="flex h-14 w-14 items-center justify-center bg-[#c5c5c5]">
                            <Icon w={40} h={38}>
                                <path d="M25 3h6v20h-6z" fill="#b5b5b5" />
                                <path d="M.5 1v36.500H40" stroke="#737373" />
                                <path d="M2.5 10.500h6V37h-6zM31.500 3.500h6V37h-6z" fill="#fff" stroke="#737373" />
                                <path d="M9 10h7v6H9zM17 15h6v8h-6z" fill="#737373" />
                                <path d="M16 15.500h3M23 22.500h8" stroke="#999" />
                            </Icon>
                        </button>
                        <hr className="mt-[6px] w-full border-[#c6c6c6]" />
                        <h3 className="text-[14px] leading-[34px] text-black">{selected}</h3>
                        <button className="border-4 border-[#c5c5c5]">
                            <ChartPreview />
                        </button>
                    </div>
                </div>
                <div className="mt-[6px] mr-[7px] flex justify-end gap-[11px] text-black">
                    <button className="h-[25px] w-[73px] border border-[#3c8cda] bg-linear-to-b from-[#f0f0f0] to-[#e5e5e5]">OK</button>
                    <button className="h-[25px] w-[73px] border border-[#acacac] bg-linear-to-b from-[#f0f0f0] to-[#e5e5e5] text-[11px]">キャンセル</button>
                </div>
                <div className="absolute right-[1px] bottom-0">
                    <Icon w={8} h={8}>
                        <path d="M6 0h2v2H6zM6 3h2v2H6zM3 3h2v2H3zM6 6h2v2H6zM3 6h2v2H3zM0 6h2v2H0z" fill="#bdbdbd" />
                    </Icon>
                </div>
            </div>
        </div>
    )
}

export default function App() {
    return (
        <div className="relative flex h-screen flex-col overflow-hidden border-r border-b border-[#808080] font-['Noto_Sans','Noto_Sans_CJK_JP',sans-serif] text-[12px] leading-4 [font-feature-settings:'palt']">
            <header className="bg-[#227447]">
                <TitleBar />
                <TabBar />
            </header>
            <Ribbon />
            <FormulaBar />
            <Sheet />
            <SheetTabs />
            <StatusBar />
            <InsertChartDialog />
        </div>
    )
}
